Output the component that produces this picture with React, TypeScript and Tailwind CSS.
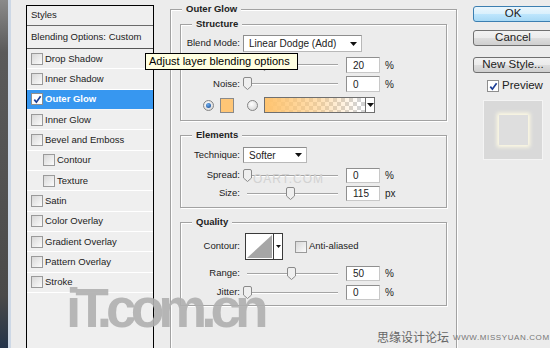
import React from "react";

const Arrow = () => (
  <svg width="7" height="4" viewBox="0 0 7 4" className="shrink-0">
    <path d="M0 0h7L3.5 4z" fill="#111" />
  </svg>
);

function Check({ checked = false }: { checked?: boolean }) {
  return (
    <span
      className={
        checked
          ? "flex h-[12px] w-[12px] shrink-0 items-center justify-center border border-[#8e8e8e] bg-white"
          : "flex h-[12px] w-[12px] shrink-0 items-center justify-center border border-[#9a9a9a] bg-[linear-gradient(135deg,#d8d8d8,#fbfbfb)]"
      }
    >
      {checked && (
        <svg width="9" height="9" viewBox="0 0 9 9">
          <path d="M1.3 4.6l2.1 2.6 4.2-6" fill="none" stroke="#1d3f96" strokeWidth="1.7" />
        </svg>
      )}
    </span>
  );
}

function Radio({ on = false }: { on?: boolean }) {
  return (
    <span className="flex h-[11px] w-[11px] shrink-0 items-center justify-center rounded-full border border-[#858585] bg-[radial-gradient(circle_at_40%_35%,#ffffff,#cfcfcf)]">
      {on && <span className="h-[5px] w-[5px] rounded-full bg-[radial-gradient(circle_at_40%_35%,#6fb0f0,#0e3f8a)]" />}
    </span>
  );
}

function Label({ t }: { t: string }) {
  return <span className="w-[59px] shrink-0 text-right">{t}</span>;
}

function Slider({ f }: { f: number }) {
  return (
    <div className="relative ml-[3px] h-[14px] w-[95px] shrink-0">
      <div className="absolute left-[4px] right-0 top-[6px] h-[2px] border-t border-b border-t-[#a4a4a4] border-b-white" />
      <svg className="absolute top-0" style={{ left: Math.round(f * 87) }} width="9" height="13" viewBox="0 0 9 13">
        <path d="M2 .5h5a1.5 1.5 0 0 1 1.5 1.5v7L4.5 12.5.5 9V2A1.5 1.5 0 0 1 2 .5z" fill="#efefef" stroke="#8a8a8a" />
      </svg>
    </div>
  );
}

function Num({ v }: { v: string }) {
  return (
    <div className="ml-[8px] flex h-full w-[34px] shrink-0 items-center border border-[#c8c8c8] border-l-[#8f8f8f] border-t-[#8f8f8f] bg-white pl-[6px] text-[10px]">
      {v}
    </div>
  );
}

function Unit({ t }: { t: string }) {
  return <span className="ml-[5px] text-[10px]">{t}</span>;
}

function Title({ t }: { t: string }) {
  return (
    <span className="-mt-[7px] ml-[11px] self-start bg-[#ececec] px-[4px] text-[9.5px] font-bold leading-[12px]">
      {t}
    </span>
  );
}

const items: { t: string; sel?: boolean; ind?: boolean }[] = [
  { t: "Drop Shadow" },
  { t: "Inner Shadow" },
  { t: "Outer Glow", sel: true },
  { t: "Inner Glow" },
  { t: "Bevel and Emboss" },
  { t: "Contour", ind: true },
  { t: "Texture", ind: true },
  { t: "Satin" },
  { t: "Color Overlay" },
  { t: "Gradient Overlay" },
  { t: "Pattern Overlay" },
  { t: "Stroke" },
];

export default function App() {
  return (
    <div className="relative flex h-[348px] w-[550px] overflow-hidden bg-[#ececec] font-['Liberation_Sans',Arial,sans-serif] text-[9.5px] text-[#222222]">
      {/* desktop strip */}
      <div className="flex h-full w-[26px] shrink-0">
        <div className="h-full w-[8px] bg-[linear-gradient(#8a8a8a,#5a5a5a_15%,#4a4a4a_85%,#24344a)]" />
        <div className="h-full w-[3px] bg-[#cdd8e6]" />
        <div className="h-full flex-1 bg-[#ececec]" />
      </div>

      {/* styles list */}
      <div className="mt-[5px] flex h-[350px] w-[128px] shrink-0 flex-col border border-black bg-[#efefef]">
        <div className="flex h-[20px] shrink-0 items-center border-b border-[#6a6a6a] pl-[4px]">Styles</div>
        <div className="flex h-[23px] shrink-0 items-center border-b border-[#555555] pl-[4px]">Blending Options: Custom</div>
        {items.map((it) => (
          <div
            key={it.t}
            className={
              it.sel
                ? "flex h-[20.35px] shrink-0 items-center gap-[2px] border-b border-[#f6f6f6] bg-[#3797f0] pl-[4px] font-bold text-white"
                : it.ind
                ? "flex h-[20.35px] shrink-0 items-center gap-[2px] border-b border-white pl-[16px]"
                : "flex h-[20.35px] shrink-0 items-center gap-[2px] border-b border-white pl-[4px]"
            }
          >
            <Check checked={it.sel} />
            <span>{it.t}</span>
          </div>
        ))}
      </div>

      {/* Outer Glow group */}
      <div className="ml-[16px] mt-[9px] flex h-[345px] w-[287px] shrink-0 flex-col border border-[#a2a2a2] shadow-[inset_1px_1px_0_#ffffff,1px_1px_0_#ffffff]">
        <Title t="Outer Glow" />

        {/* Structure */}
        <div className="ml-[9px] mt-[9px] flex h-[97px] w-[267px] flex-col border border-[#a2a2a2] shadow-[inset_1px_1px_0_#ffffff,1px_1px_0_#ffffff]">
          <Title t="Structure" />
          <div className="mt-[5px] flex h-[17px] items-center">
            <Label t="Blend Mode:" />
            <div className="ml-[3px] flex h-[17px] w-[119px] items-center justify-between border border-[#b8b8b8] border-l-[#8e8e8e] border-t-[#8e8e8e] bg-white pl-[5px] pr-[4px] text-[10px]">
              Linear Dodge (Add)
              <Arrow />
            </div>
          </div>
          <div className="mt-[5px] flex h-[16px] items-center">
            <Label t="Opacity:" />
            <Slider f={0.2} />
            <Num v="20" />
            <Unit t="%" />
          </div>
          <div className="mt-[3px] flex h-[16px] items-center">
            <Label t="Noise:" />
            <Slider f={0} />
            <Num v="0" />
            <Unit t="%" />
          </div>
          <div className="mt-[5px] flex h-[16px] items-center">
            <span className="ml-[22px]">
              <Radio on />
            </span>
            <div className="ml-[6px] h-[15px] w-[14px] border border-[#8a8a8a] bg-[#ffc676]" />
            <span className="ml-[13px]">
              <Radio />
            </span>
            <div className="ml-[6px] flex h-[16px] w-[111px] border border-[#6f6f6f] bg-[conic-gradient(#d3d3d3_25%,#ffffff_0_50%,#d3d3d3_0_75%,#ffffff_0)] bg-[length:8px_8px]">
              <div className="flex-1 bg-[linear-gradient(to_right,#ffc46f,rgba(255,200,120,0.55)_55%,rgba(255,210,140,0)_95%)]" />
              <div className="flex w-[9px] items-center justify-center border-l border-[#6f6f6f] bg-white">
                <Arrow />
              </div>
            </div>
          </div>
        </div>

        {/* Elements */}
        <div className="ml-[9px] mt-[14px] flex h-[73px] w-[267px] flex-col border border-[#a2a2a2] shadow-[inset_1px_1px_0_#ffffff,1px_1px_0_#ffffff]">
          <Title t="Elements" />
          <div className="mt-[6px] flex h-[16px] items-center">
            <Label t="Technique:" />
            <div className="ml-[3px] flex h-[16px] w-[64px] items-center justify-between border border-[#b8b8b8] border-l-[#8e8e8e] border-t-[#8e8e8e] bg-white pl-[5px] pr-[4px] text-[10px]">
              Softer
              <Arrow />
            </div>
          </div>
          <div className="mt-[5px] flex h-[15px] items-center">
            <Label t="Spread:" />
            <Slider f={0} />
            <Num v="0" />
            <Unit t="%" />
          </div>
          <div className="mt-[3px] flex h-[15px] items-center">
            <Label t="Size:" />
            <Slider f={0.49} />
            <Num v="115" />
            <Unit t="px" />
          </div>
        </div>

        {/* Quality */}
        <div className="ml-[9px] mt-[14px] flex h-[84px] w-[267px] flex-col border border-[#a2a2a2] shadow-[inset_1px_1px_0_#ffffff,1px_1px_0_#ffffff]">
          <Title t="Quality" />
          <div className="mt-[5px] flex h-[27px] items-center">
            <Label t="Contour:" />
            <div className="ml-[5px] flex h-[27px] w-[38px] border border-[#3a3a3a] bg-white">
              <svg width="27" height="25" viewBox="0 0 27 25" className="shrink-0">
                <rect width="27" height="25" fill="#ffffff" />
                <path d="M1 24L26 1V24Z" fill="#a6a6a6" />
              </svg>
              <div className="flex flex-1 items-center justify-center border-l border-[#3a3a3a]">
                <svg width="5" height="3" viewBox="0 0 5 3">
                  <path d="M0 0h5L2.5 3z" fill="#111" />
                </svg>
              </div>
            </div>
            <span className="ml-[12px]">
              <Check />
            </span>
            <span className="ml-[2px]">Anti-aliased</span>
          </div>
          <div className="mt-[6px] flex h-[15px] items-center">
            <Label t="Range:" />
            <Slider f={0.5} />
            <Num v="50" />
            <Unit t="%" />
          </div>
          <div className="mt-[4px] flex h-[15px] items-center">
            <Label t="Jitter:" />
            <Slider f={0} />
            <Num v="0" />
            <Unit t="%" />
          </div>
        </div>
      </div>

      {/* right column */}
      <div className="ml-[16px] flex w-[80px] shrink-0 flex-col text-[11.5px]">
        <div className="mt-[6px] flex h-[16px] items-center justify-center rounded-[3px] border border-[#3c7fb1] bg-[linear-gradient(#eaf6fd,#d9f0fc_50%,#bee6fd_51%,#a7d9f5)]">
          OK
        </div>
        <div className="mt-[8px] flex h-[16px] items-center justify-center rounded-[3px] border border-[#707070] bg-[linear-gradient(#f2f2f2,#ebebeb_50%,#dddddd_51%,#cfcfcf)]">
          Cancel
        </div>
        <div className="mt-[11px] flex h-[16px] items-center justify-center rounded-[3px] border border-[#707070] bg-[linear-gradient(#f2f2f2,#ebebeb_50%,#dddddd_51%,#cfcfcf)]">
          New Style...
        </div>
        <div className="mt-[7px] flex h-[12px] items-center pl-[14px]">
          <Check checked />
          <span className="ml-[3px]">Preview</span>
        </div>
        <div className="ml-[10px] mt-[8px] flex h-[60px] w-[60px] items-center justify-center border border-[#f4f4f4] bg-[#d9d9d9]">
          <div className="h-[30px] w-[29px] bg-[#dedede] shadow-[0_0_4px_2px_#fffbe4]" />
        </div>
      </div>

      {/* tooltip */}
      <div className="absolute left-[145px] top-[53px] flex h-[17px] w-[153px] items-center border border-black bg-[#ffffe1] pl-[3px] text-[11px] text-black">
        Adjust layer blending options
      </div>

      {/* watermarks */}
      <div className="pointer-events-none absolute left-[253px] top-[170px] text-[12px] tracking-[1px] text-[#d2d2d2]">
        OART.COM
      </div>
      <div className="pointer-events-none absolute left-[66px] top-[281px] text-[55px] font-bold leading-none tracking-[-6px] text-[#b0b0b0] opacity-90">
        iT.com.cn
      </div>
      <div className="pointer-events-none absolute left-[377px] top-[329px] font-['Noto_Sans_CJK_SC',sans-serif] text-[12px] leading-[16px] text-[#666666]">
        思缘设计论坛
      </div>
      <div className="pointer-events-none absolute left-[453px] top-[333px] text-[8px] leading-[10px] tracking-[0.6px] text-[#777777]">
        WWW.MISSYUAN.COM
      </div>
    </div>
  );
}
